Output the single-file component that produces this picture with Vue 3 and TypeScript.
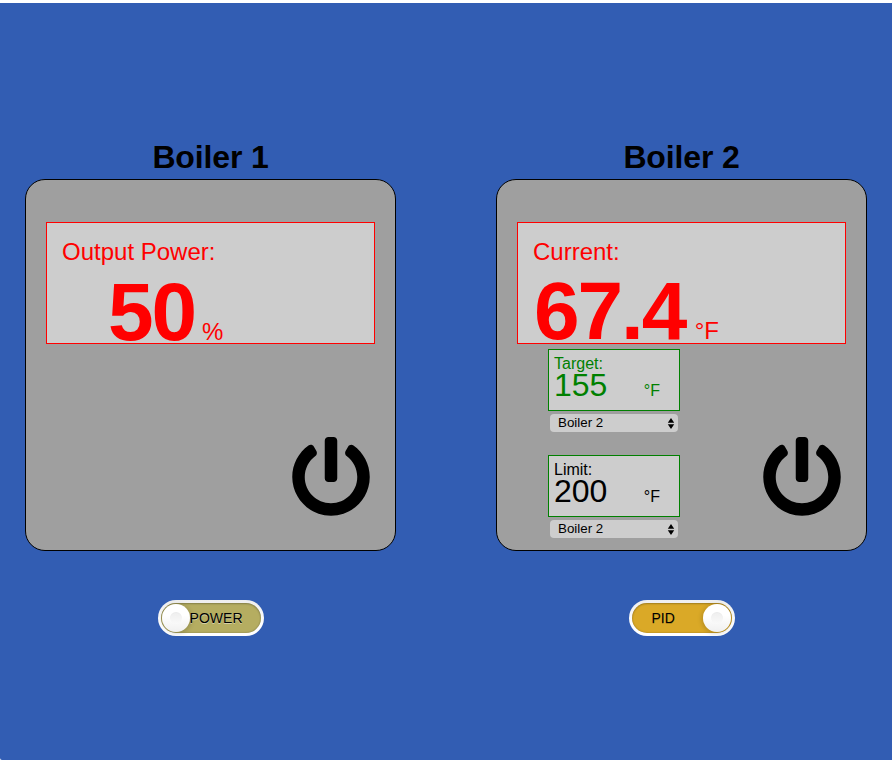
<script setup lang="ts">
import { reactive } from 'vue'

interface Setting {
  label: string
  value: number
  tone: 'target' | 'limit'
  source: string
}

interface Boiler {
  name: string
  caption: string
  value: string
  unit: string
  percent: boolean
  settings: Setting[]
  mode: string
  on: boolean
}

const boilers = reactive<Boiler[]>([
  {
    name: 'Boiler 1',
    caption: 'Output Power:',
    value: '50',
    unit: '%',
    percent: true,
    settings: [],
    mode: 'POWER',
    on: false,
  },
  {
    name: 'Boiler 2',
    caption: 'Current:',
    value: '67.4',
    unit: '°F',
    percent: false,
    settings: [
      { label: 'Target:', value: 155, tone: 'target', source: 'Boiler 2' },
      { label: 'Limit:', value: 200, tone: 'limit', source: 'Boiler 2' },
    ],
    mode: 'PID',
    on: true,
  },
])
</script>

<template>
  <main class="dashboard">
    <section v-for="b in boilers" :key="b.name" class="boiler">
      <h1 class="title">{{ b.name }}</h1>
      <div class="panel">
        <div class="display">
          <div class="caption">{{ b.caption }}</div>
          <div class="reading" :class="{ percent: b.percent }">
            <span class="value">{{ b.value }}</span>
            <span class="unit">{{ b.unit }}</span>
          </div>
        </div>
        <div class="controls">
          <div class="settings">
            <div v-for="s in b.settings" :key="s.label" class="setting">
              <div class="box" :class="s.tone">
                <div class="box-label">{{ s.label }}</div>
                <div class="box-row">
                  <span class="box-value">{{ s.value }}</span>
                  <span class="box-unit">°F</span>
                </div>
              </div>
              <button class="select" type="button">
                <span>{{ s.source }}</span>
                <svg class="arrows" width="6" height="11" viewBox="0 0 6 11">
                  <path d="M3 0L6.2 4.7H-0.2zM3 11L-0.2 6.3H6.2z" />
                </svg>
              </button>
            </div>
          </div>
          <svg class="power" viewBox="0 0 512 512">
            <path
              d="M400 54.1c63 45 104 118.6 104 201.9 0 136.8-110.8 247.7-247.5 248C120 504.3 8.2 393 8 256.4 7.9 173.1 48.9 99.3 111.8 54.2c11.7-8.3 28-4.8 35 7.7L162.6 90c5.9 10.5 3.1 23.8-6.6 31-41.5 30.8-68 79.6-68 134.9-.1 92.3 74.5 168.1 168 168.1 91.6 0 168.6-74.2 168-169.1-.3-51.8-24.7-101.8-68.1-134-9.7-7.2-12.4-20.5-6.5-30.9l15.8-28.1c7-12.4 23.2-16.1 34.8-7.8zM296 264V24c0-13.3-10.7-24-24-24h-32c-13.3 0-24 10.7-24 24v240c0 13.3 10.7 24 24 24h32c13.3 0 24-10.7 24-24z"
            />
          </svg>
        </div>
      </div>
      <div class="switch" :class="{ on: b.on }" @click="b.on = !b.on">
        <div class="track">
          <span class="mode">{{ b.mode }}</span>
        </div>
        <span class="handle"></span>
      </div>
    </section>
  </main>
</template>

<style>
body {
  background: #fff;
}
</style>

<style scoped>
.dashboard {
  box-sizing: border-box;
  display: flex;
  gap: 100px;
  height: 757px;
  margin-top: 3px;
  padding: 136px 25px 0;
  background: #325db3;
  border-bottom-left-radius: 2px;
  font-family: 'Liberation Sans', Arial, sans-serif;
  color: #000;
}
.boiler {
  display: flex;
  flex-direction: column;
  align-items: center;
  width: 371px;
}
.title {
  margin: 0 0 4px;
  font-size: 32px;
  line-height: 36px;
  font-weight: bold;
  letter-spacing: -0.15px;
}
.panel {
  box-sizing: border-box;
  width: 371px;
  height: 372px;
  padding: 42px 20px 0;
  border: 1px solid #000;
  border-radius: 20px;
  background: #9f9f9f;
}
.display {
  box-sizing: border-box;
  height: 122px;
  padding: 15px 15px 0;
  border: 1px solid #f00;
  background: #cdcdcd;
  color: #f00;
}
.caption {
  font-size: 24px;
  line-height: 28px;
}
.reading {
  display: flex;
  align-items: baseline;
  gap: 9.5px;
  padding-left: 1px;
  line-height: 90px;
}
.reading.percent {
  gap: 7px;
  padding: 1px 0 0 46px;
}
.value {
  font-size: 82px;
  font-weight: bold;
  letter-spacing: -2.1px;
}
.unit {
  font-size: 24px;
  line-height: 28px;
}
.controls {
  display: flex;
  justify-content: space-between;
  padding: 5px 4px 0 31px;
}
.settings {
  display: flex;
  flex-direction: column;
  gap: 23px;
}
.setting {
  display: flex;
  flex-direction: column;
  align-items: center;
  gap: 3px;
}
.box {
  box-sizing: border-box;
  width: 132px;
  height: 62px;
  padding: 5px 19px 0 5px;
  border: 1px solid #008000;
  background: #cdcdcd;
}
.box.target {
  color: #008000;
}
.box-label {
  font-size: 16px;
  line-height: 18px;
}
.box-row {
  display: flex;
  justify-content: space-between;
  align-items: baseline;
  margin-top: -6px;
  line-height: 36px;
}
.box-value {
  font-size: 32px;
}
.box-unit {
  font-size: 16px;
  line-height: 18px;
}
.select {
  display: flex;
  align-items: center;
  justify-content: space-between;
  width: 128px;
  height: 18px;
  padding: 0 4px 0 8px;
  border: 0;
  border-radius: 4px;
  background: #cdcdcd;
  color: #000;
  font: 13.33px/18px 'Liberation Sans', Arial, sans-serif;
}
.arrows {
  overflow: visible;
}
.power {
  width: 80px;
  height: 80px;
  margin-top: 88px;
}
.switch {
  position: relative;
  box-sizing: border-box;
  width: 106px;
  height: 36px;
  margin-top: 49px;
  padding: 3px;
  border-radius: 18px;
  background: linear-gradient(to bottom, #eeeeee, #ffffff 25px);
}
.track {
  box-sizing: border-box;
  height: 30px;
  padding-right: 18px;
  border-radius: 15px;
  background: #b5ad61;
  box-shadow: inset 0 1px 2px rgba(0, 0, 0, 0.2), inset 0 0 2px rgba(0, 0, 0, 0.25);
  font-size: 14px;
  line-height: 30px;
  text-align: right;
  text-shadow: 0 1px rgba(255, 255, 255, 0.45);
}
.on .track {
  padding: 0 0 0 20px;
  background: #daa927;
  text-align: left;
  text-shadow: 0 1px rgba(0, 0, 0, 0.2);
}
.handle {
  position: absolute;
  top: 4px;
  left: 4px;
  width: 28px;
  height: 28px;
  border-radius: 50%;
  background: linear-gradient(to bottom, #ffffff 40%, #f0f0f0);
  box-shadow: 1px 1px 5px rgba(0, 0, 0, 0.2);
}
.on .handle {
  left: 74px;
  box-shadow: -1px 1px 5px rgba(0, 0, 0, 0.2);
}
.handle::before {
  content: '';
  position: absolute;
  top: 8px;
  left: 8px;
  width: 12px;
  height: 12px;
  border-radius: 50%;
  background: linear-gradient(to bottom, #eeeeee, #f9f9f9);
  box-shadow: inset 0 1px rgba(0, 0, 0, 0.02);
}
</style>
